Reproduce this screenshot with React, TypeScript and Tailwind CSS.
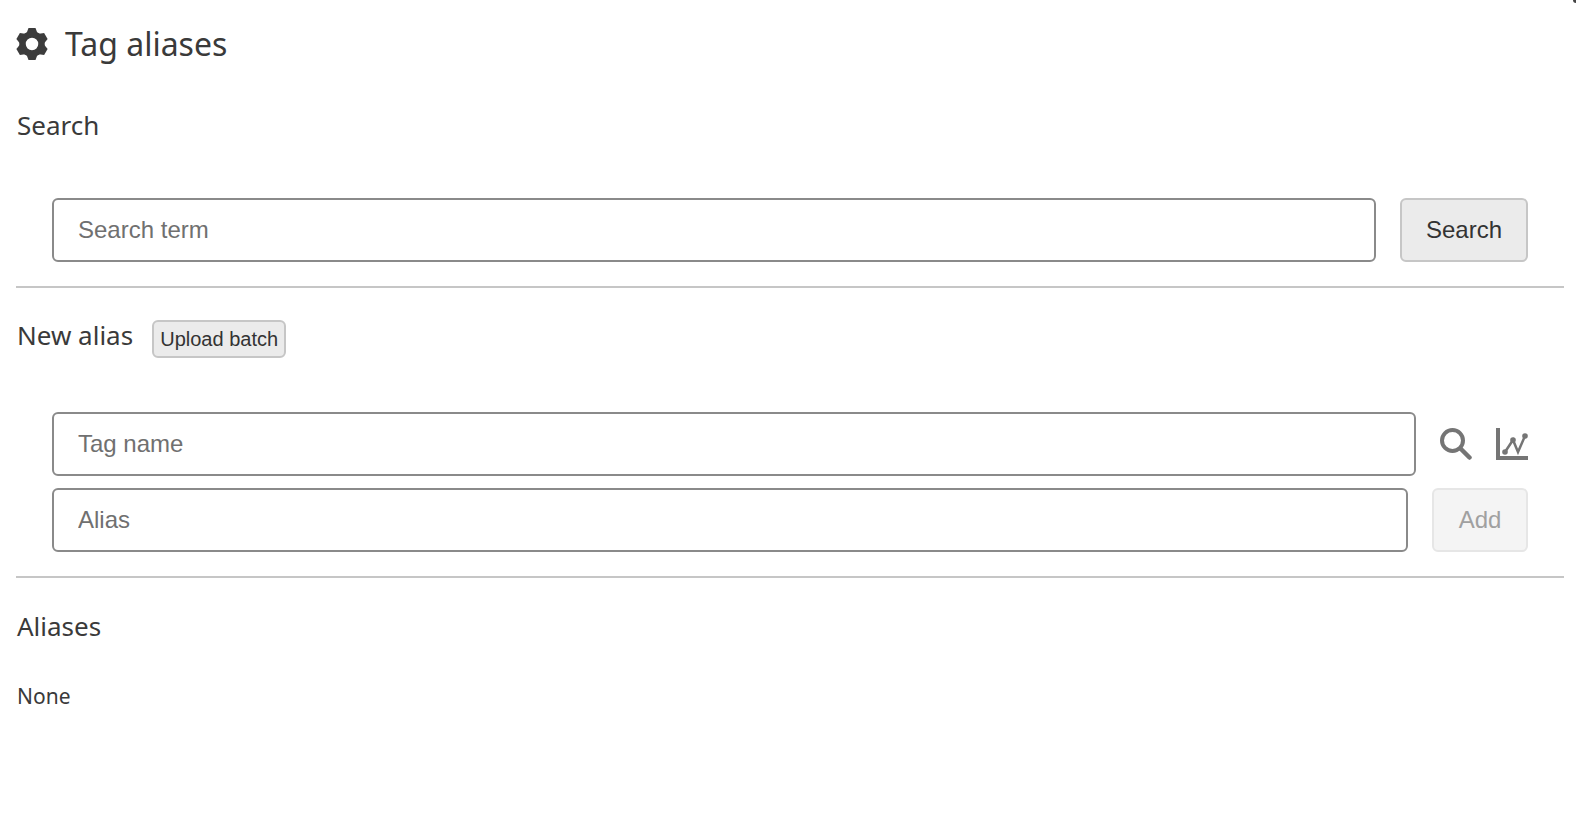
const fieldClass =
  "h-16 min-w-0 flex-1 rounded-md border-2 border-[#8a8a8a] bg-white px-6 font-['Liberation_Sans',sans-serif] text-[24px] text-[#333] outline-none placeholder:text-[#707070]";

const teeth = [0, 60, 120, 180, 240, 300];

function GearIcon() {
  return (
    <svg width="32" height="32" viewBox="0 0 32 32" fill="none" aria-hidden="true">
      <circle cx="16" cy="16" r="9.5" stroke="#3c3c3c" strokeWidth="6.5" />
      {teeth.map((deg) => (
        <path
          key={deg}
          d="M12.5 0 H19.5 L22 6.5 H10 Z"
          fill="#3c3c3c"
          transform={`rotate(${deg} 16 16)`}
        />
      ))}
    </svg>
  );
}

function SearchIcon() {
  return (
    <svg width="32" height="32" viewBox="0 0 32 32" fill="none" aria-hidden="true">
      <circle cx="12.5" cy="12.5" r="10.5" stroke="#757575" strokeWidth="4" />
      <path d="M20.5 20.5 L29.5 29.5" stroke="#757575" strokeWidth="4.5" strokeLinecap="round" />
    </svg>
  );
}

function ChartIcon() {
  return (
    <svg width="32" height="32" viewBox="0 0 32 32" fill="none" aria-hidden="true">
      <path d="M2 0 V30 H32" stroke="#757575" strokeWidth="4" />
      <path d="M9 24 L17 12 L22 24 L29 8" stroke="#757575" strokeWidth="2.5" />
      <circle cx="9" cy="24" r="2.8" fill="#757575" />
      <circle cx="17" cy="12" r="2.8" fill="#757575" />
      <circle cx="29" cy="8" r="2.8" fill="#757575" />
    </svg>
  );
}

export default function App() {
  return (
    <div className="relative h-[814px] overflow-hidden bg-white pl-4 pr-3 font-['Noto_Sans',sans-serif] text-[#3a3a3a]">
      <div className="absolute right-0 top-0 h-[3px] w-[3px] rounded-bl-sm bg-[#444]" />

      {/* Header */}
      <div className="flex h-[88px] items-center gap-[17px]">
        <GearIcon />
        <h1 className="text-[32px] leading-none">Tag aliases</h1>
      </div>

      {/* Search */}
      <section className="h-[200px] border-b-2 border-[#c6c6c6]">
        <h2 className="pl-px pt-[19px] text-[26px] leading-[36px]">Search</h2>
        <div className="mt-[55px] flex gap-6 pl-9 pr-9">
          <input className={fieldClass} placeholder="Search term" />
          <button className="h-16 w-[128px] rounded-md border-2 border-[#c6c6c6] bg-[#ebebeb] font-['Liberation_Sans',sans-serif] text-[24px] text-[#333]">
            Search
          </button>
        </div>
      </section>

      {/* New alias */}
      <section className="h-[290px] border-b-2 border-[#c6c6c6]">
        <div className="flex items-center gap-[19px] pl-px pt-8">
          <h2 className="-mt-[9px] text-[26px] leading-[38px]">New alias</h2>
          <button className="h-[38px] w-[134px] rounded-md border-2 border-[#c6c6c6] bg-[#ebebeb] font-['Liberation_Sans',sans-serif] text-[20px] leading-none text-[#333]">
            Upload batch
          </button>
        </div>
        <div className="mt-[54px] flex flex-col gap-3 pl-9 pr-9">
          <div className="flex items-center">
            <input className={fieldClass} placeholder="Tag name" />
            <div className="ml-6 flex items-center gap-6">
              <SearchIcon />
              <ChartIcon />
            </div>
          </div>
          <div className="flex gap-6">
            <input className={fieldClass} placeholder="Alias" />
            <button
              disabled
              className="h-16 w-24 rounded-md border-2 border-[#e6e6e6] bg-[#f4f4f4] font-['Liberation_Sans',sans-serif] text-[24px] text-[#a0a0a0]"
            >
              Add
            </button>
          </div>
        </div>
      </section>

      {/* Aliases */}
      <section>
        <h2 className="pl-px pt-[30px] text-[26px] leading-[36px]">Aliases</h2>
        <p className="mt-[38px] pl-px text-[21px] leading-[28px]">None</p>
      </section>
    </div>
  );
}
